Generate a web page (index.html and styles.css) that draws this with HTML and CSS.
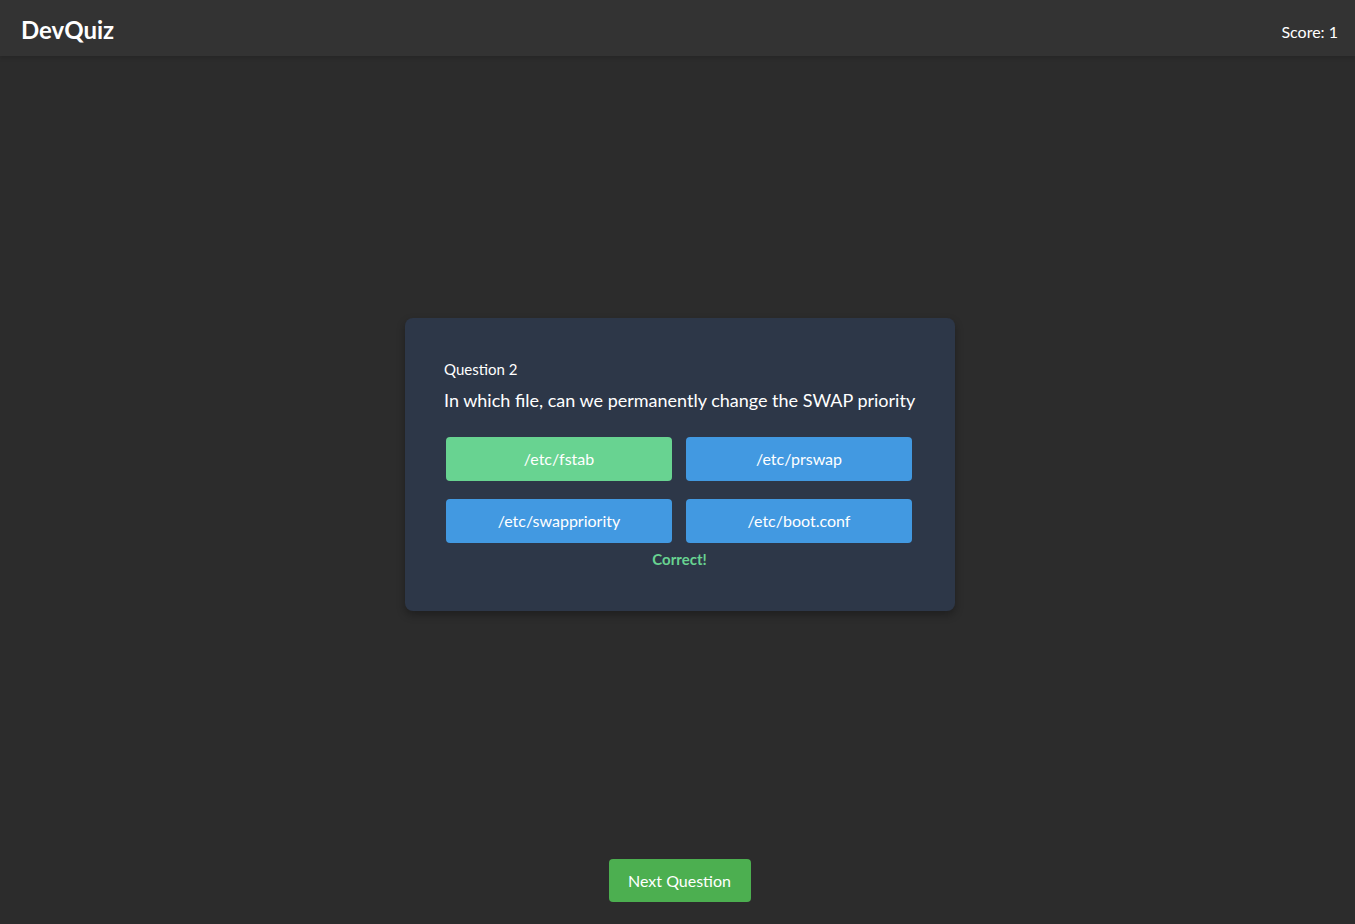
FILE: index.html
```html
<!DOCTYPE html>
<html lang="en">
<head>
<meta charset="utf-8">
<title>DevQuiz</title>
<link rel="stylesheet" href="styles.css">
</head>
<body>
<header class="topbar">
  <div class="brand">DevQuiz</div>
  <div class="score">Score: 1</div>
</header>
<main class="stage">
  <section class="card">
    <div class="q-num">Question 2</div>
    <div class="q-text">In which file, can we permanently change the SWAP priority</div>
    <div class="answers">
      <button class="answer correct">/etc/fstab</button>
      <button class="answer">/etc/prswap</button>
      <button class="answer">/etc/swappriority</button>
      <button class="answer">/etc/boot.conf</button>
    </div>
    <div class="feedback">Correct!</div>
  </section>
</main>
<footer class="bottom">
  <button class="next">Next Question</button>
</footer>
</body>
</html>
```
FILE: styles.css
```css
* { box-sizing: border-box; }
html, body { margin: 0; padding: 0; }
body {
  background: #2c2c2c;
  color: #fff;
  font-family: Lato, "Open Sans", sans-serif;
  min-height: 100vh;
  display: flex;
  flex-direction: column;
}
.topbar {
  height: 56px;
  background: #333333;
  box-shadow: 0 2px 4px rgba(0,0,0,0.15);
  display: flex;
  align-items: center;
  justify-content: space-between;
  padding: 0 17px 0 21px;
}
.brand {
  font-size: 24px;
  font-weight: 700;
  padding-top: 3px;
}
.score {
  font-size: 16px;
  padding-top: 6px;
}
.stage {
  flex: 1;
  display: flex;
  align-items: center;
  justify-content: center;
  padding: 34px 0 0 5px;
}
.card {
  width: 550px;
  background: #2d3748;
  border-radius: 8px;
  box-shadow: 0 4px 8px rgba(0,0,0,0.3);
  padding: 40px 40px 41px 39px;
}
.q-num {
  font-size: 15px;
  line-height: 22px;
}
.q-text {
  font-size: 18px;
  line-height: 25px;
  margin-top: 8px;
  white-space: nowrap;
}
.answers {
  display: grid;
  grid-template-columns: 226px 226px;
  column-gap: 14px;
  row-gap: 18px;
  margin-top: 24px;
  padding-left: 2px;
}
.answer {
  height: 44px;
  border: none;
  border-radius: 4px;
  background: #4299e1;
  color: #fff;
  font-family: inherit;
  font-size: 16px;
  cursor: pointer;
}
.answer.correct { background: #68d391; }
.feedback {
  text-align: center;
  color: #68d391;
  font-weight: 700;
  font-size: 15px;
  line-height: 22px;
  margin-top: 5px;
}
.bottom {
  display: flex;
  justify-content: center;
  padding: 21px 0 22px 4px;
}
.next {
  width: 142px;
  height: 43px;
  border: none;
  border-radius: 4px;
  background: #4caf50;
  color: #fff;
  font-family: inherit;
  font-size: 16px;
}
```
